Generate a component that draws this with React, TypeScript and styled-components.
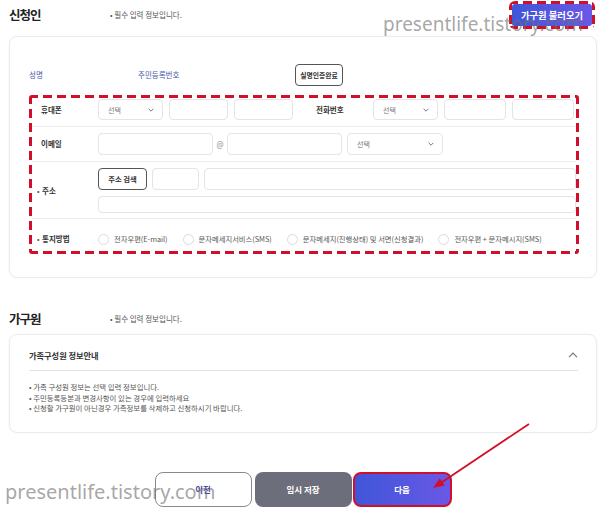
import React from "react";
import styled, { createGlobalStyle } from "styled-components";

const GlobalStyle = createGlobalStyle`
  html, body { margin: 0; padding: 0; background: #fff; }
  body { font-family: "Noto Sans CJK KR", "Noto Sans", sans-serif; color: #222; }
  * { box-sizing: border-box; }
`;

const KR = `"Noto Sans CJK KR", "Noto Sans", sans-serif`;
const RED = "#d0102a";

const dashes = `
  linear-gradient(90deg, ${RED} 64%, transparent 0) top left / 14px 3px repeat-x border-box,
  linear-gradient(90deg, ${RED} 64%, transparent 0) bottom left / 14px 3px repeat-x border-box,
  linear-gradient(180deg, ${RED} 64%, transparent 0) top left / 3px 14px repeat-y border-box,
  linear-gradient(180deg, ${RED} 64%, transparent 0) top right / 3px 14px repeat-y border-box
`;

const Page = styled.div`
  position: relative;
  width: 600px;
  height: 510px;
  overflow: hidden;
  padding: 0 3px 0 9px;
`;

const SectionHead = styled.div<{ $mt: number; $mb: number }>`
  display: flex;
  align-items: center;
  height: 29px;
  margin-top: ${(p) => p.$mt}px;
  margin-bottom: ${(p) => p.$mb}px;
`;

const Title = styled.h2`
  margin: 0;
  width: 101px;
  font-family: ${KR};
  font-size: 12.5px;
  line-height: 16px;
  font-weight: 700;
  color: #222;
  letter-spacing: -1px;
`;

const Note = styled.span`
  flex: 1;
  font-family: ${KR};
  font-size: 7.5px;
  color: #555;
`;

const LoadButton = styled.button`
  height: 28px;
  width: 86px;
  margin-right: 2px;
  padding: 0;
  border-radius: 6px;
  border: 3px solid transparent;
  background: ${dashes}, linear-gradient(90deg, #3f56d8, #6a58e6) padding-box;
  color: #fff;
  font-family: ${KR};
  font-size: 9.3px;
  font-weight: 700;
`;

const Card = styled.section<{ $pad: string }>`
  border: 1px solid #ebebeb;
  border-radius: 8px;
  background: #fff;
  box-shadow: 0 0 3px rgba(0, 0, 0, 0.04);
  padding: ${(p) => p.$pad};
`;

const NameRow = styled.div`
  display: flex;
  align-items: center;
  height: 21px;
  margin-bottom: 10px;
`;

const NameLabel = styled.span<{ $w: number }>`
  width: ${(p) => p.$w}px;
  font-family: ${KR};
  font-size: 7.5px;
  color: #4656a8;
`;

const OutlineButton = styled.button<{ $w: number; $fs: number }>`
  flex-shrink: 0;
  width: ${(p) => p.$w}px;
  height: 22px;
  padding: 0;
  border: 1px solid #555;
  border-radius: 4px;
  background: #fff;
  color: #333;
  font-family: ${KR};
  font-size: ${(p) => p.$fs}px;
  font-weight: 700;
`;

const DashedBox = styled.div`
  border: 3px solid transparent;
  border-radius: 3px;
  background: ${dashes};
`;

const FormRow = styled.div<{ $pad: string; $align: string }>`
  display: flex;
  align-items: ${(p) => p.$align};
  padding: ${(p) => p.$pad};
  border-bottom: 1px solid #ececec;
  &:last-child {
    border-bottom: none;
  }
`;

const RowLabel = styled.div<{ $w: number; $pl: number; $lh?: number }>`
  flex-shrink: 0;
  width: ${(p) => p.$w}px;
  padding-left: ${(p) => p.$pl}px;
  line-height: ${(p) => p.$lh ?? 12}px;
  font-family: ${KR};
  font-size: 7.5px;
  font-weight: 700;
  color: #333;
`;

const Bullet = styled.span`
  display: inline-block;
  width: 5px;
  font-weight: 400;
  color: #555;
`;

const Controls = styled.div<{ $gap?: number }>`
  display: flex;
  align-items: center;
  gap: ${(p) => p.$gap ?? 5}px;
  flex: 1;
`;

const Stack = styled.div`
  display: flex;
  flex-direction: column;
  gap: 6px;
  flex: 1;
`;

const Field = styled.input<{ $w?: number; $h?: number }>`
  height: ${(p) => p.$h ?? 22}px;
  ${(p) => (p.$w ? `width: ${p.$w}px; flex-shrink: 0;` : `flex: 1; min-width: 0;`)}
  border: 1px solid #e4e4e4;
  border-radius: 4px;
  background: #fff;
  padding: 0;
  outline: none;
`;

const SelectBox = styled.div<{ $w: number; $h?: number; $ml?: number }>`
  flex-shrink: 0;
  display: flex;
  align-items: center;
  justify-content: space-between;
  width: ${(p) => p.$w}px;
  height: ${(p) => p.$h ?? 22}px;
  margin-left: ${(p) => p.$ml ?? 0}px;
  padding: 0 8px 0 9px;
  border: 1px solid #e4e4e4;
  border-radius: 4px;
  background: #fff;
  font-family: ${KR};
  font-size: 7px;
  color: #777;
`;

const At = styled.span`
  width: 14px;
  text-align: center;
  font-family: "Noto Sans", sans-serif;
  font-size: 8px;
  color: #999;
`;

const RadioGroup = styled.div`
  display: flex;
  align-items: center;
  gap: 15px;
`;

const RadioItem = styled.label`
  display: flex;
  align-items: center;
  gap: 5px;
  font-family: ${KR};
  font-size: 7.3px;
  line-height: 12px;
  color: #555;
`;

const RadioCircle = styled.span`
  width: 11px;
  height: 11px;
  border: 1px solid #dcdcdc;
  border-radius: 50%;
  background: #fff;
`;

const AccordionHead = styled.div`
  display: flex;
  align-items: center;
  justify-content: space-between;
  padding: 0 0 9px;
  border-bottom: 1px solid #e3e3e3;
`;

const AccordionTitle = styled.h3`
  margin: 0;
  font-family: ${KR};
  font-size: 8.2px;
  line-height: 12px;
  font-weight: 700;
  color: #333;
`;

const InfoList = styled.ul`
  margin: 11px 0 0;
  padding: 0;
  list-style: none;
`;

const InfoItem = styled.li`
  font-family: ${KR};
  font-size: 7.4px;
  line-height: 10.5px;
  color: #555;
  &::before {
    content: "• ";
  }
`;

const ButtonBar = styled.div`
  display: flex;
  justify-content: center;
  margin-top: 39px;
`;

const NavButton = styled.button<{ $variant: "prev" | "temp" | "next"; $ml: number }>`
  height: 35px;
  width: ${(p) => (p.$variant === "next" ? 99 : 97)}px;
  margin-left: ${(p) => p.$ml}px;
  padding: 0;
  border-radius: 8px;
  font-family: ${KR};
  font-size: 8.5px;
  font-weight: 700;
  ${(p) =>
    p.$variant === "prev"
      ? `background: #fff; border: 1px solid #8a8a8a; color: #4a45a8;`
      : p.$variant === "temp"
      ? `background: #6d6e7b; border: none; color: #fff;`
      : `background: linear-gradient(90deg, #3f56d8, #6a58e6); border: 2.5px solid ${RED}; color: #fff;`}
`;

const Watermark = styled.div<{ $x: number; $y: number; $size: number }>`
  position: absolute;
  left: ${(p) => p.$x}px;
  top: ${(p) => p.$y}px;
  font-family: "Noto Sans", sans-serif;
  font-size: ${(p) => p.$size}px;
  line-height: 1;
  color: rgba(110, 110, 110, 0.62);
  white-space: nowrap;
  pointer-events: none;
`;

const Overlay = styled.svg`
  position: absolute;
  left: 0;
  top: 0;
  pointer-events: none;
`;

const Chevron = ({ up }: { up?: boolean }) => (
  <svg width={up ? 10 : 6} height={up ? 6 : 4} viewBox={up ? "0 0 10 6" : "0 0 6 4"}>
    {up ? (
      <path d="M1 5.2 L5 1.2 L9 5.2" fill="none" stroke="#777" strokeWidth="1.2" />
    ) : (
      <path d="M0.6 0.8 L3 3.2 L5.4 0.8" fill="none" stroke="#666" strokeWidth="0.9" />
    )}
  </svg>
);

const Select = ({ w, h, ml }: { w: number; h?: number; ml?: number }) => (
  <SelectBox $w={w} $h={h} $ml={ml}>
    <span>선택</span>
    <Chevron />
  </SelectBox>
);

const radios = [
  "전자우편(E-mail)",
  "문자메세지서비스(SMS)",
  "문자메세지(진행상태) 및 서면(신청결과)",
  "전자우편 + 문자메시지(SMS)",
];

export default function App() {
  return (
    <>
      <GlobalStyle />
      <Page>
        <SectionHead $mt={0} $mb={7}>
          <Title>신청인</Title>
          <Note>• 필수 입력 정보입니다.</Note>
          <LoadButton>가구원 불러오기</LoadButton>
        </SectionHead>

        <Card $pad="27px 17px 23px 19px">
          <NameRow>
            <NameLabel $w={109}>성명</NameLabel>
            <NameLabel $w={157}>주민등록번호</NameLabel>
            <OutlineButton $w={48} $fs={6.8}>실명인증완료</OutlineButton>
          </NameRow>

          <DashedBox>
            <FormRow $pad="1px 0 6px" $align="flex-start">
              <RowLabel $w={66} $pl={9} $lh={21}>휴대폰</RowLabel>
              <Controls $gap={6}>
                <Select w={65} h={21} />
                <Field $w={59} $h={21} />
                <Field $w={59} $h={21} />
                <RowLabel $w={68} $pl={17} $lh={21}>전화번호</RowLabel>
                <Select w={65} h={21} />
                <Field $w={62} $h={21} />
                <Field $w={62} $h={21} />
              </Controls>
            </FormRow>

            <FormRow $pad="6px 0 6px" $align="flex-start">
              <RowLabel $w={66} $pl={9} $lh={22}>이메일</RowLabel>
              <Controls $gap={0}>
                <Field $w={115} />
                <At>@</At>
                <Field $w={115} />
                <Select w={96} ml={5} />
              </Controls>
            </FormRow>

            <FormRow $pad="6px 0 5px" $align="center">
              <RowLabel $w={66} $pl={5}>
                <Bullet>•</Bullet>주소
              </RowLabel>
              <Stack>
                <Controls>
                  <OutlineButton $w={49} $fs={7.3}>주소 검색</OutlineButton>
                  <Field $w={47} />
                  <Field />
                </Controls>
                <Field $h={21} />
              </Stack>
            </FormRow>

            <FormRow $pad="14px 0 6px" $align="center">
              <RowLabel $w={66} $pl={5}>
                <Bullet>•</Bullet>통지방법
              </RowLabel>
              <RadioGroup>
                {radios.map((r) => (
                  <RadioItem key={r}>
                    <RadioCircle />
                    {r}
                  </RadioItem>
                ))}
              </RadioGroup>
            </FormRow>
          </DashedBox>
        </Card>

        <SectionHead $mt={26} $mb={1}>
          <Title>가구원</Title>
          <Note>• 필수 입력 정보입니다.</Note>
        </SectionHead>

        <Card $pad="14px 18px 18px 19px">
          <AccordionHead>
            <AccordionTitle>가족구성원 정보안내</AccordionTitle>
            <Chevron up />
          </AccordionHead>
          <InfoList>
            <InfoItem>가족 구성원 정보는 선택 입력 정보입니다.</InfoItem>
            <InfoItem>주민등록등본과 변경사항이 있는 경우에 입력하세요</InfoItem>
            <InfoItem>신청할 가구원이 아닌경우 가족정보를 삭제하고 신청하시기 바랍니다.</InfoItem>
          </InfoList>
        </Card>

        <ButtonBar>
          <NavButton $variant="prev" $ml={0}>이전</NavButton>
          <NavButton $variant="temp" $ml={3}>임시 저장</NavButton>
          <NavButton $variant="next" $ml={1}>다음</NavButton>
        </ButtonBar>

        <Watermark $x={383} $y={15} $size={19}>presentlife.tistory.com</Watermark>
        <Watermark $x={5} $y={482} $size={20}>presentlife.tistory.com</Watermark>

        <Overlay width="600" height="510" viewBox="0 0 600 510">
          <line x1="529" y1="424" x2="440" y2="483.5" stroke={RED} strokeWidth="1.8" />
          <polygon points="433,488 444.7,485.6 439.7,478.2" fill={RED} />
        </Overlay>
      </Page>
    </>
  );
}
